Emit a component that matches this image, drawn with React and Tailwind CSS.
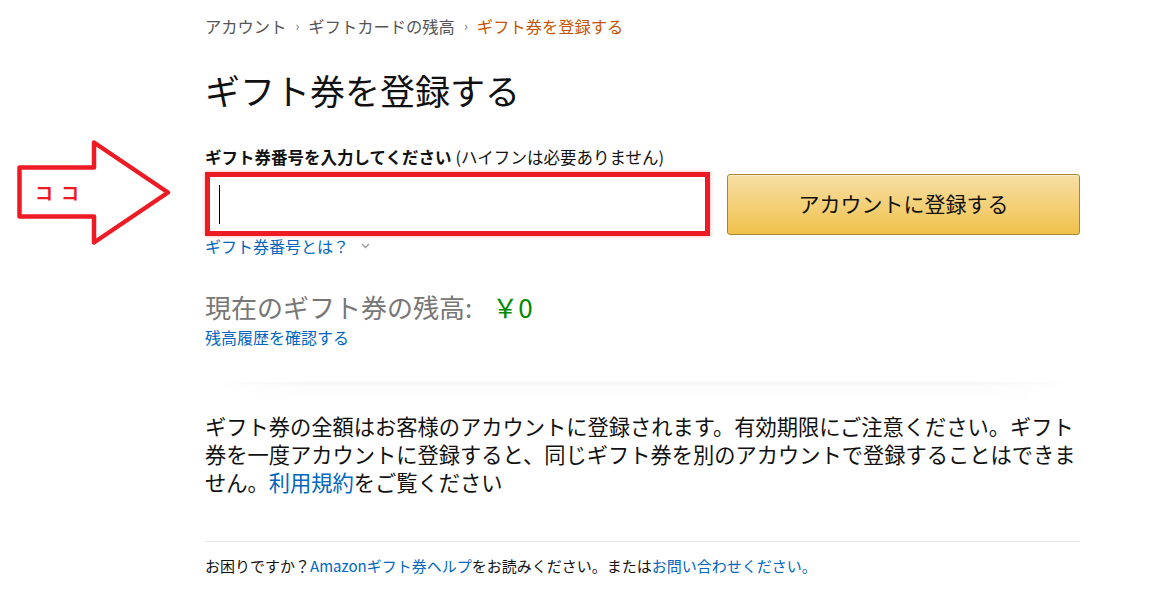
import React from "react";

export default function App() {
  return (
    <div className="relative w-[1151px] h-[603px] overflow-hidden bg-white text-[#111] font-['Noto_Sans_CJK_JP','Noto_Sans',sans-serif]">
      <div className="ml-[205px] w-[875px]">
        {/* breadcrumb */}
        <div className="pt-[14px] h-[38px] flex items-center text-[16.3px] leading-[24px] text-[#555]">
          <span>アカウント</span>
          <span className="mx-[9px] text-[13px] text-[#777]">›</span>
          <span>ギフトカードの残高</span>
          <span className="mx-[9px] text-[13px] text-[#777]">›</span>
          <span className="text-[#c45500]">ギフト券を登録する</span>
        </div>

        <h1 className="mt-[30px] h-[44px] text-[35px] leading-[44px] font-normal">ギフト券を登録する</h1>

        <div className="mt-[34px] h-[22px] flex items-center leading-[22px]">
          <span className="text-[16.5px] font-bold">ギフト券番号を入力してください</span>
          <span className="ml-[4px] text-[16.5px]">(ハイフンは必要ありません)</span>
        </div>

        <div className="mt-[4px] flex items-center">
          <div className="w-[506px] h-[64px] border-[5px] border-[#ed1c24] shadow-[0_0_4px_rgba(237,28,36,0.35)] flex items-center pl-[9px] bg-white">
            <div className="w-px h-[39px] bg-black" />
          </div>
          <button className="ml-[17px] w-[354px] h-[61px] rounded-[3px] border border-[#a88734] bg-[linear-gradient(to_bottom,#f7dfa5,#f0c14b)] shadow-[inset_0_1px_0_rgba(255,255,255,0.4)] text-[21px] text-[#111] flex items-center justify-center">
            アカウントに登録する
          </button>
        </div>

        <div className="flex items-center h-[20px] leading-[20px] text-[16px] text-[#0066c0]">
          <span>ギフト券番号とは？</span>
          <svg className="ml-[12px]" width="9" height="6" viewBox="0 0 9 6">
            <path d="M1 1 L4.5 4.5 L8 1" fill="none" stroke="#999" strokeWidth="1.3" />
          </svg>
        </div>

        <div className="mt-[34px] flex items-center h-[34px] leading-[34px] text-[26px]">
          <span className="text-[#777]">現在のギフト券の残高:</span>
          <span className="ml-[20px] text-[#008a00]">￥0</span>
        </div>
        <div className="mt-[2px] h-[22px] text-[16px] leading-[22px] text-[#0066c0]">残高履歴を確認する</div>

        <div className="mt-[34px] h-[22px] bg-[linear-gradient(to_bottom,rgba(0,0,0,0.045),rgba(0,0,0,0.012)_20%,rgba(0,0,0,0))] [mask-image:linear-gradient(to_right,transparent,black_12%,black_88%,transparent)]" />

        <p className="mt-[8px] text-[21.25px] leading-[28px]">
          ギフト券の全額はお客様のアカウントに登録されます。有効期限にご注意ください。ギフト券を一度アカウントに登録すると、同じギフト券を別のアカウントで登録することはできません。
          <span className="text-[#0066c0]">利用規約</span>をご覧ください
        </p>

        <div className="mt-[45px] h-px bg-[#e7e7e7]" />

        <div className="mt-[14px] text-[15px] leading-[20px]">
          お困りですか？<span className="text-[#0066c0]">Amazonギフト券ヘルプ</span>をお読みください。または<span className="text-[#0066c0]">お問い合わせください。</span>
        </div>
      </div>

      {/* annotation arrow */}
      <svg className="absolute left-0 top-0" width="190" height="260" viewBox="0 0 190 260">
        <path
          d="M19.5 167.5 H94 V142.5 L168 192.5 L94 242.5 V216.5 H19.5 Z"
          fill="none"
          stroke="#ed1c24"
          strokeWidth="4.5"
          strokeLinejoin="round"
        />
      </svg>
      <span className="absolute left-[35px] top-[180px] text-[18px] leading-[24px] font-bold tracking-[8px] text-[#ed1c24]">ココ</span>
    </div>
  );
}
